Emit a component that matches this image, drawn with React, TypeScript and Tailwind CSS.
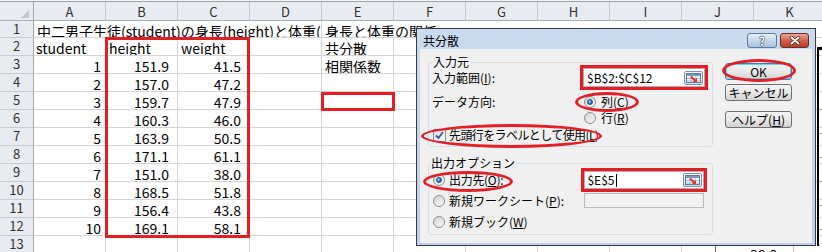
import React from 'react';

const cols = ['A', 'B', 'C', 'D', 'E', 'F', 'G', 'H', 'I', 'J', 'K'];

type Row = { n: number; a?: string; b?: string; c?: string; e?: string; num?: boolean };

const rows: Row[] = [
    { n: 2, a: 'student', b: 'height', c: 'weight', e: '共分散' },
    { n: 3, a: '1', b: '151.9', c: '41.5', e: '相関係数', num: true },
    { n: 4, a: '2', b: '157.0', c: '47.2', num: true },
    { n: 5, a: '3', b: '159.7', c: '47.9', num: true },
    { n: 6, a: '4', b: '160.3', c: '46.0', num: true },
    { n: 7, a: '5', b: '163.9', c: '50.5', num: true },
    { n: 8, a: '6', b: '171.1', c: '61.1', num: true },
    { n: 9, a: '7', b: '151.0', c: '38.0', num: true },
    { n: 10, a: '8', b: '168.5', c: '51.8', num: true },
    { n: 11, a: '9', b: '156.4', c: '43.8', num: true },
    { n: 12, a: '10', b: '169.1', c: '58.1', num: true },
    { n: 13 },
];

const cell = 'overflow-hidden whitespace-nowrap border-r border-b border-[#d4d4d4] pt-[3px] text-[14px] leading-[14px]';

const RowHead = ({ n }: { n: number }) => (
    <div className="border-r border-b border-r-[#9ea6af] border-b-[#c8ccd2] bg-[#e8ebef] pt-[1px] text-center text-[13px] leading-[14px] text-[#333]">
        {n}
    </div>
);

const Radio = ({ checked = false }: { checked?: boolean }) => (
    <span className="flex h-[12px] w-[12px] shrink-0 items-center justify-center rounded-full border border-[#8e8f8f] bg-linear-to-br from-[#d2d2d2] to-[#fbfbfb]">
        {checked && <span className="h-[6px] w-[6px] rounded-full border border-[#1d4f80] bg-[radial-gradient(circle_at_35%_35%,#8fdcff,#1a78c2_60%,#0d4d8a)]" />}
    </span>
);

const RangeButton = () => (
    <div className="flex h-[14px] w-[19px] items-center justify-center rounded-[2px] border border-[#7f93ad] bg-linear-to-b from-[#fbfdff] to-[#d3deeb]">
        <svg width="15" height="10" viewBox="0 0 15 10">
            <rect x="0.5" y="0.5" width="14" height="9" fill="#fff" stroke="#5a7aa8" />
            <rect x="1" y="1" width="13" height="2" fill="#7d9bc8" />
            <path d="M1 5.5H14M1 8H14M5 3V9.5M10 3V9.5" stroke="#9fb3cf" strokeWidth="1" />
            <path d="M5 3.5L9.5 8" stroke="#e0302a" strokeWidth="2" />
            <polygon points="11,9 11,5 7,9" fill="#e0302a" />
        </svg>
    </div>
);

export default function App() {
    return (
        <div className="relative h-[252px] w-[822px] overflow-hidden bg-white font-['Noto_Sans_CJK_JP',sans-serif] text-black">
            <div className="h-[2px] border-b border-[#9da3ab] bg-[#f5f5f5]" />

            {/* column headers */}
            <div className="grid h-[19px] grid-cols-[34px_repeat(11,72px)]">
                <div className="relative border-r border-b border-r-[#9ea6af] border-b-[#a9b0b8] bg-[#e8ebef]">
                    <svg className="absolute right-[4px] bottom-[2px]" width="8" height="8">
                        <polygon points="8,0 8,8 0,8" fill="#c2c7ce" />
                    </svg>
                </div>
                {cols.map((c) => (
                    <div key={c} className="border-r border-b border-r-[#c3c9d0] border-b-[#a9b0b8] bg-[#e8ebef] pt-[2px] text-center text-[13px] leading-[15px] text-[#333]">
                        {c}
                    </div>
                ))}
            </div>

            {/* row 1 */}
            <div className="grid h-[17px] grid-cols-[34px_repeat(11,72px)]">
                <RowHead n={1} />
                <div className={`${cell} col-span-4 pl-[3px]`}>中二男子生徒(student)の身長(height)と体重(weight)</div>
                <div className={`${cell} col-span-7 pl-[3px]`}>身長と体重の関係</div>
            </div>

            {rows.map((r) => (
                <div key={r.n} className="grid h-[18px] grid-cols-[34px_repeat(11,72px)]">
                    <RowHead n={r.n} />
                    <div className={`${cell} ${r.num ? 'pr-[4px] text-right' : 'pl-[2px]'}`}>{r.a}</div>
                    <div className={`${cell} ${r.num ? 'pr-[8px] text-right' : 'pl-[3px]'}`}>{r.b}</div>
                    <div className={`${cell} ${r.num ? 'pr-[8px] text-right' : 'pl-[3px]'}`}>{r.c}</div>
                    <div className={cell} />
                    <div className={`${cell} pl-[3px]`}>{r.e}</div>
                    <div className={cell} />
                    <div className={cell} />
                    <div className={cell} />
                    <div className={cell} />
                    <div className={cell} />
                    <div className={cell} />
                </div>
            ))}

            {/* object behind the dialog, right edge */}
            <div className="absolute top-[47px] left-[817px] h-[199px] w-[6px] border-t-[3px] border-l-2 border-black" />
            {['top-[109px]', 'top-[133px]', 'top-[157px]', 'top-[181px]', 'top-[205px]', 'top-[229px]'].map((t) => (
                <div key={t} className={`absolute left-[819px] h-[1px] w-[3px] bg-[#9a9a9a] ${t}`} />
            ))}
            <div className="absolute top-[246px] left-[684px] h-[6px] w-[138px] bg-white">
                <div className="absolute top-0 left-[31px] h-full w-[1px] bg-[#6b6b6b]" />
                <div className="absolute top-0 left-[109px] h-full w-[1px] bg-[#c8c8c8]" />
                <div className="absolute top-[1px] left-[66px] text-[14px] leading-[14px]">38.0</div>
            </div>

            {/* 共分散 dialog */}
            <div className="absolute top-[28px] left-[416px] flex h-[218px] w-[400px] flex-col border border-[#3b3b3b] bg-linear-to-b from-[#c9dbef] to-[#bcd1e9]">
                <div className="flex h-[20px] shrink-0 items-start pt-[4px] pr-[6px] pl-[6px]">
                    <span className="text-[12px] leading-[15px]">共分散</span>
                    <div className="ml-auto flex gap-[3px]">
                        <div className="flex h-[15px] w-[30px] items-center justify-center rounded-[3px] border border-[#5d7da3] bg-linear-to-b from-[#e6eef8] via-[#c8d8ec] to-[#a8bfdc]">
                            <span className="text-[12px] leading-[12px] font-bold text-white [text-shadow:0_0_1px_#22324a,0_0_1px_#22324a,0_0_1px_#22324a]">?</span>
                        </div>
                        <div className="flex h-[15px] w-[29px] items-center justify-center rounded-[3px] border border-[#6b2c27] bg-linear-to-b from-[#eaa898] via-[#d2604f] to-[#bd3a2c]">
                            <svg width="12" height="9" viewBox="0 0 12 9">
                                <path d="M2.5 1.5L9.5 7.5M9.5 1.5L2.5 7.5" stroke="#4a1a16" strokeWidth="3.4" strokeLinecap="round" />
                                <path d="M2.5 1.5L9.5 7.5M9.5 1.5L2.5 7.5" stroke="#fff" strokeWidth="2" strokeLinecap="round" />
                            </svg>
                        </div>
                    </div>
                </div>

                <div className="mx-[3px] mb-[2px] flex flex-1 bg-[#f0f0f0] pt-[13px] pl-[8px] text-[12px] leading-[14px]">
                    <div className="flex w-[285px] flex-col">
                        {/* 入力元 */}
                        <div className="relative flex h-[85px] flex-col rounded-[3px] border border-[#d5dfe5] pr-[7px] pl-[3px]">
                            <span className="absolute -top-[8px] left-[3px] bg-[#f0f0f0] px-[1px]">入力元</span>
                            <div className="mt-[5px] flex h-[19px] items-center justify-between">
                                <span>
                                    入力範囲(<span className="underline">I</span>):
                                </span>
                                <div className="flex h-[19px] w-[122px] items-center border border-[#abadb3] bg-white pr-[1px] pl-[3px] outline-3 outline-[#e31e24]">
                                    <span>$B$2:$C$12</span>
                                    <div className="ml-auto">
                                        <RangeButton />
                                    </div>
                                </div>
                            </div>
                            <div className="mt-[8px] flex h-[14px] items-center">
                                <span className="w-[152px]">データ方向:</span>
                                <Radio checked />
                                <span className="ml-[5px]">
                                    列(<span className="underline">C</span>)
                                </span>
                            </div>
                            <div className="mt-[2px] flex h-[14px] items-center pl-[152px]">
                                <Radio />
                                <span className="ml-[5px]">
                                    行(<span className="underline">R</span>)
                                </span>
                            </div>
                            <div className="mt-[3px] flex h-[14px] items-center pl-[1px]">
                                <span className="flex h-[13px] w-[13px] items-center justify-center border border-[#8f8f8f] bg-linear-to-br from-[#dcdcdc] to-white">
                                    <svg width="9" height="9" viewBox="0 0 9 9">
                                        <path d="M1 4.5L3.5 7L8 1" fill="none" stroke="#3d4f96" strokeWidth="1.8" />
                                    </svg>
                                </span>
                                <span className="ml-[3px] tracking-[-0.6px]">
                                    先頭行をラベルとして使用(<span className="underline">L</span>)
                                </span>
                            </div>
                        </div>

                        {/* 出力オプション */}
                        <div className="relative mt-[16px] flex h-[72px] flex-col rounded-[3px] border border-[#d5dfe5] pr-[8px] pl-[4px]">
                            <span className="absolute -top-[8px] left-[1px] bg-[#f0f0f0] px-[1px]">出力オプション</span>
                            <div className="mt-[7px] flex h-[18px] items-center">
                                <div className="flex w-[152px] items-center">
                                    <Radio checked />
                                    <span className="ml-[4px] tracking-[-0.3px]">
                                        出力先(<span className="underline">O</span>):
                                    </span>
                                </div>
                                <div className="flex h-[18px] w-[120px] items-center border border-[#abadb3] bg-white pr-[1px] pl-[2px] outline-3 outline-[#e31e24]">
                                    <span>$E$5</span>
                                    <span className="ml-[1px] h-[13px] w-[1px] bg-black" />
                                    <div className="ml-auto">
                                        <RangeButton />
                                    </div>
                                </div>
                            </div>
                            <div className="mt-[4px] flex h-[15px] items-center">
                                <div className="flex w-[151px] items-center">
                                    <Radio />
                                    <span className="ml-[4px]">
                                        新規ワークシート(<span className="underline">P</span>):
                                    </span>
                                </div>
                                <div className="h-[15px] w-[120px] border border-[#b9bcbf] bg-[#f2f2f2]" />
                            </div>
                            <div className="mt-[7px] flex h-[14px] items-center">
                                <Radio />
                                <span className="ml-[4px]">
                                    新規ブック(<span className="underline">W</span>)
                                </span>
                            </div>
                        </div>
                    </div>

                    {/* buttons */}
                    <div className="ml-[12px] flex w-[67px] flex-col">
                        <div className="mt-[1px] flex h-[17px] items-center justify-center rounded-[3px] border border-[#3c7fb1] bg-linear-to-b from-[#f4f4f4] via-[#e8e8e8] to-[#d2d2d2] shadow-[inset_0_0_0_1px_#5fd7f5]">
                            OK
                        </div>
                        <div className="mt-[4px] flex h-[17px] items-center justify-center rounded-[3px] border border-[#707070] bg-linear-to-b from-[#f4f4f4] via-[#e8e8e8] to-[#d2d2d2]">
                            キャンセル
                        </div>
                        <div className="mt-[10px] flex h-[17px] items-center justify-center rounded-[3px] border border-[#707070] bg-linear-to-b from-[#f4f4f4] via-[#e8e8e8] to-[#d2d2d2]">
                            ヘルプ(<span className="underline">H</span>)
                        </div>
                    </div>
                </div>
            </div>

            {/* red annotations */}
            <div className="absolute top-[37px] left-[105px] h-[201px] w-[145px] border-[3px] border-[#e31e24]" />
            <div className="absolute top-[92px] left-[321px] h-[19px] w-[74px] border-[3px] border-[#e31e24]" />
            <div className="absolute top-[59px] left-[722px] h-[23px] w-[74px] rounded-[50%] border-[3px] border-[#e31e24]" />
            <div className="absolute top-[92px] left-[575px] h-[20px] w-[64px] rounded-[50%] border-[3px] border-[#e31e24]" />
            <div className="absolute top-[124px] left-[421px] h-[24px] w-[181px] rounded-[50%] border-[3px] border-[#e31e24]" />
            <div className="absolute top-[171px] left-[423px] h-[21px] w-[90px] rounded-[50%] border-[3px] border-[#e31e24]" />
        </div>
    );
}
